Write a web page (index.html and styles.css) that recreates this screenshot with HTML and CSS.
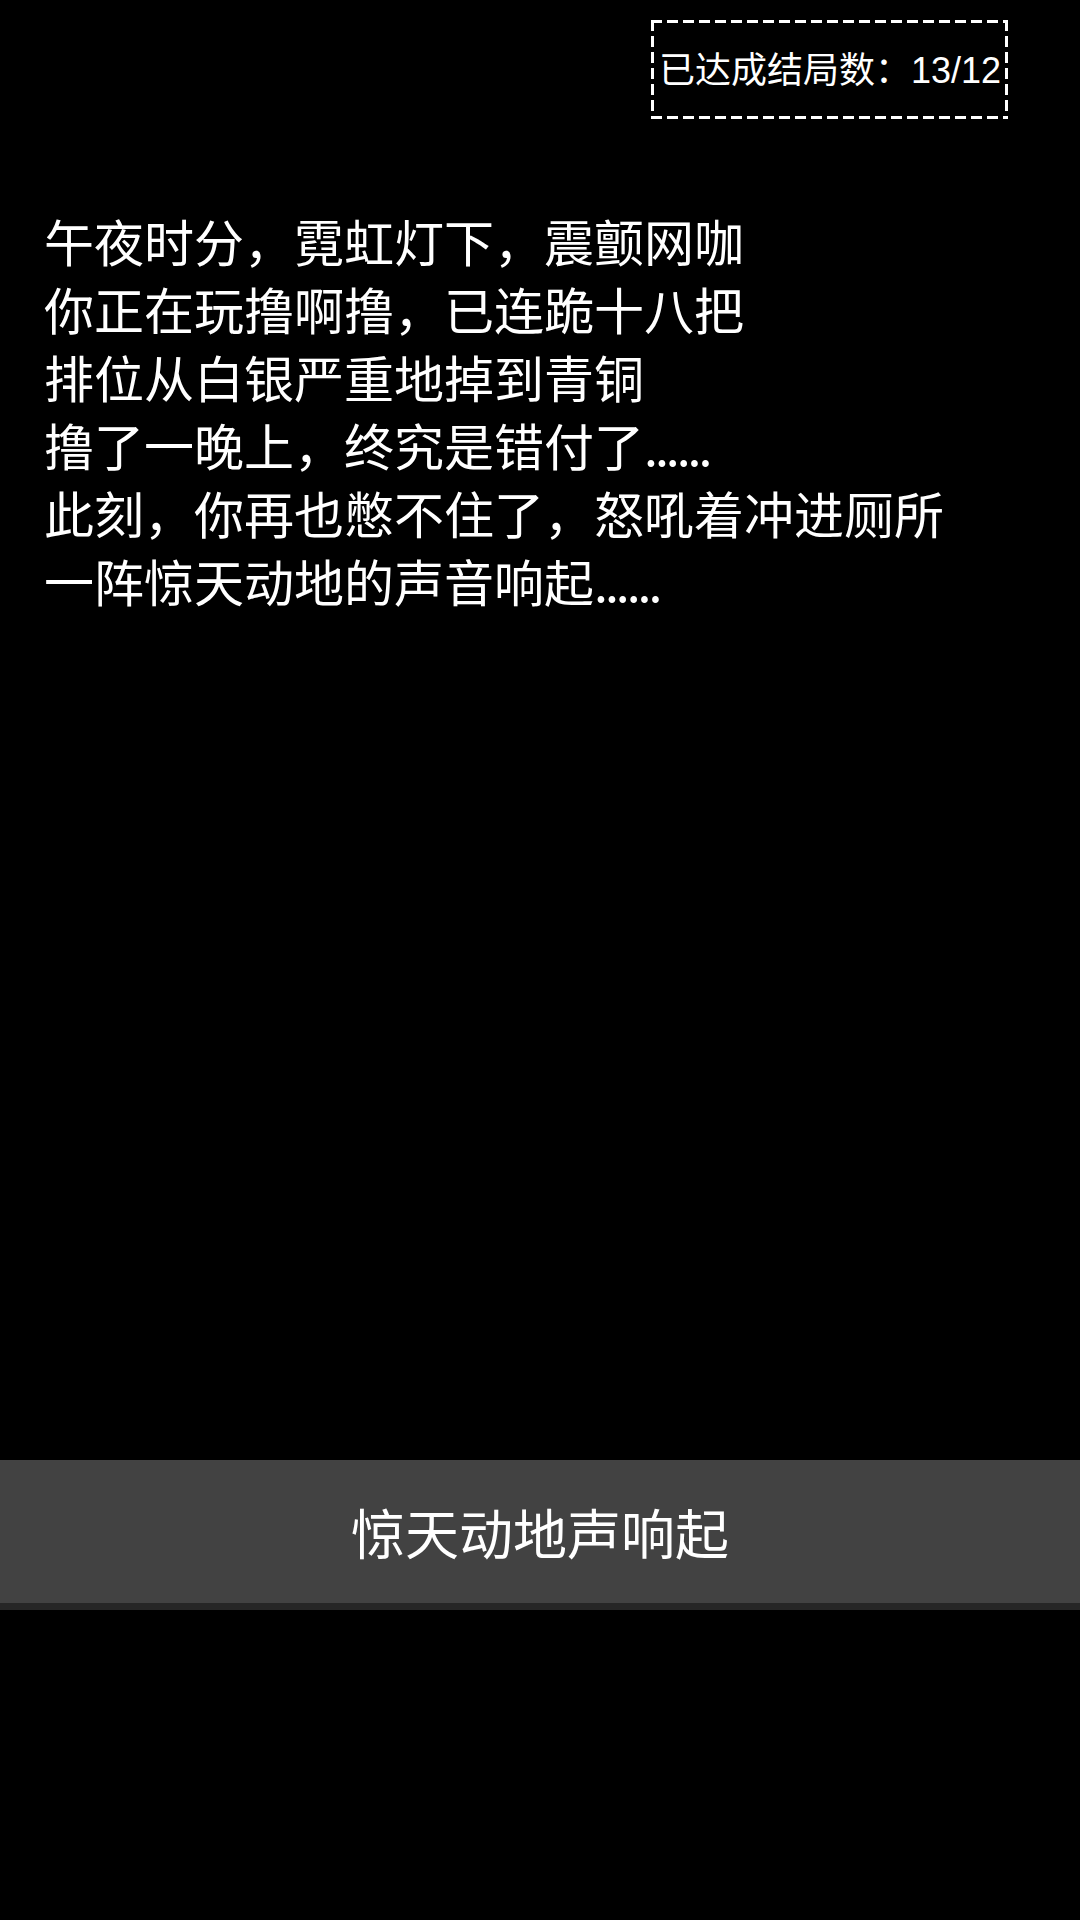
FILE: index.html
```html
<!DOCTYPE html>
<html lang="zh-CN">
<head>
  <meta charset="UTF-8" />
  <title>结局</title>
  <meta name="viewport" content="width=device-width, initial-scale=1.0" />
  <link rel="stylesheet" href="styles.css">
</head>
<body>

<div class="page">
  <header class="top">
    <div class="ending-count">已达成结局数：13/12</div>
  </header>

  <div class="story">
    <p>午夜时分，霓虹灯下，震颤网咖</p>
    <p>你正在玩撸啊撸，已连跪十八把</p>
    <p>排位从白银严重地掉到青铜</p>
    <p>撸了一晚上，终究是错付了<span class="dots">......</span></p>
    <p>此刻，你再也憋不住了，怒吼着冲进厕所</p>
    <p>一阵惊天动地的声音响起<span class="dots">......</span></p>
  </div>

  <button class="choice">惊天动地声响起</button>
  <div class="bottom-space"></div>
</div>

</body>
</html>
```

FILE: styles.css
```css
* { box-sizing: border-box; }
body {
  margin: 0;
  background: #000;
  color: #fff;
  font-family: 'Noto Sans CJK SC', sans-serif;
}

.page {
  display: flex;
  flex-direction: column;
  height: 100vh;
}

.top {
  display: flex;
  justify-content: flex-end;
  padding: 20px 72px 0 0;
}

/* dashed frame drawn with gradients to get long dashes */
.ending-count {
  padding: 33px 7px 30px 8px;
  font-family: 'Liberation Sans', 'Noto Sans CJK SC', sans-serif;
  font-size: 36px;
  line-height: 36px;
  white-space: nowrap;
  background:
    repeating-linear-gradient(90deg, #fff 0 11px, transparent 11px 16px) top left / 100% 3px no-repeat,
    repeating-linear-gradient(90deg, #fff 0 11px, transparent 11px 16px) bottom left / 100% 3px no-repeat,
    repeating-linear-gradient(180deg, #fff 0 11px, transparent 11px 16px) top left / 3px 100% no-repeat,
    repeating-linear-gradient(180deg, #fff 0 11px, transparent 11px 16px) top right / 3px 100% no-repeat;
}

.story {
  flex: 1;
  padding: 87px 0 0 44px;
  font-size: 50px;
  line-height: 68px;
}

.story p {
  margin: 0;
  white-space: nowrap;
}

.dots {
  letter-spacing: -3px;
}

.choice {
  height: 150px;
  border: none;
  border-bottom: 7px solid #262626;
  background: #424242;
  color: #fff;
  font-family: 'Noto Sans CJK SC', sans-serif;
  font-size: 54px;
  padding: 0;
  cursor: pointer;
}

.bottom-space {
  height: 310px;
}
```
